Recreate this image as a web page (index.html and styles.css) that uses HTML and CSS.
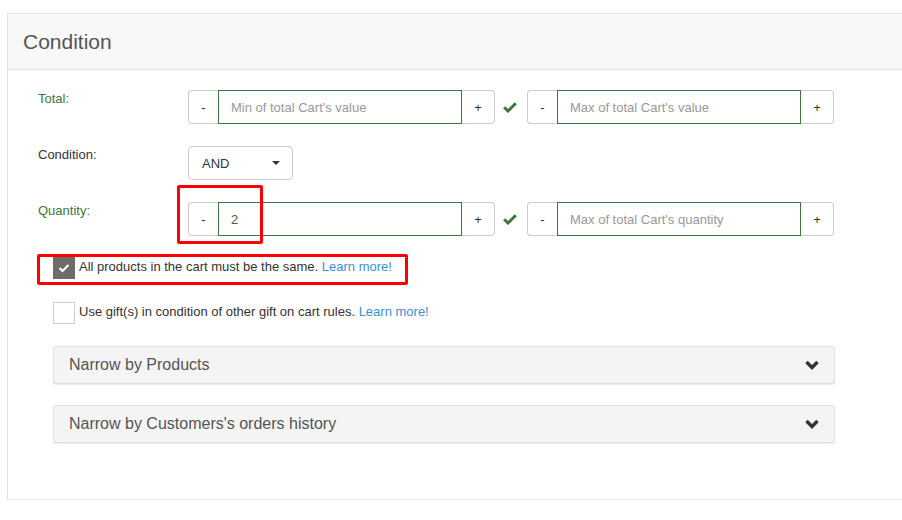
FILE: index.html
```html
<!DOCTYPE html>
<html>
<head>
<meta charset="utf-8">
<link rel="stylesheet" href="styles.css">
</head>
<body>
<div class="panel">
  <div class="panel-head">Condition</div>
  <div class="panel-body">
    <div class="row">
      <div class="lbl ok">Total:</div>
      <div class="ctrl">
        <div class="igroup">
          <span class="addon left">-</span>
          <input class="field" type="text" placeholder="Min of total Cart's value">
          <span class="addon right">+</span>
        </div>
        <span class="valid"><svg width="14" height="12" viewBox="0 0 14 12"><path d="M1.2 6.2 L5 10 L12.8 2.2" fill="none" stroke="#3c763d" stroke-width="3"/></svg></span>
        <div class="igroup">
          <span class="addon left">-</span>
          <input class="field" type="text" placeholder="Max of total Cart's value">
          <span class="addon right">+</span>
        </div>
      </div>
    </div>
    <div class="row">
      <div class="lbl">Condition:</div>
      <div class="ctrl">
        <div class="select"><span>AND</span><span class="caret"></span></div>
      </div>
    </div>
    <div class="row">
      <div class="lbl ok">Quantity:</div>
      <div class="ctrl">
        <div class="igroup">
          <span class="addon left">-</span>
          <input class="field" type="text" value="2">
          <span class="addon right">+</span>
        </div>
        <span class="valid"><svg width="14" height="12" viewBox="0 0 14 12"><path d="M1.2 6.2 L5 10 L12.8 2.2" fill="none" stroke="#3c763d" stroke-width="3"/></svg></span>
        <div class="igroup">
          <span class="addon left">-</span>
          <input class="field" type="text" placeholder="Max of total Cart's quantity">
          <span class="addon right">+</span>
        </div>
      </div>
    </div>
    <div class="extras">
      <label class="cb-row">
        <span class="cb checked"><svg width="12" height="10" viewBox="0 0 12 10"><path d="M1.5 5 L4.5 8 L10.5 2" fill="none" stroke="#fff" stroke-width="2.2"/></svg></span>
        <span class="cb-text">All products in the cart must be the same. <a class="more" href="#">Learn more!</a></span>
      </label>
      <label class="cb-row">
        <span class="cb"></span>
        <span class="cb-text">Use gift(s) in condition of other gift on cart rules. <a class="more" href="#">Learn more!</a></span>
      </label>
      <div class="acc first">
        <span>Narrow by Products</span>
        <svg class="chev" width="14" height="10" viewBox="0 0 14 10"><path d="M1.5 2 L7 7.5 L12.5 2" fill="none" stroke="#333" stroke-width="3.4"/></svg>
      </div>
      <div class="acc">
        <span>Narrow by Customers's orders history</span>
        <svg class="chev" width="14" height="10" viewBox="0 0 14 10"><path d="M1.5 2 L7 7.5 L12.5 2" fill="none" stroke="#333" stroke-width="3.4"/></svg>
      </div>
    </div>
  </div>
</div>
<div class="mark mark-qty"></div>
<div class="mark mark-same"></div>
</body>
</html>
```
FILE: styles.css
```css
* { box-sizing: border-box; }
html, body { margin: 0; padding: 0; background: #fff; }
body {
  font-family: "Liberation Sans", Arial, sans-serif;
  color: #333;
  position: relative;
  height: 520px;
  overflow: hidden;
}
.panel {
  margin: 13px 0 0 7px;
  border: 1px solid #e3e3e3;
  border-right: none;
  height: 487px;
}
.panel-head {
  height: 56px;
  background: #f8f8f8;
  border-bottom: 1px solid #e3e3e3;
  display: flex;
  align-items: center;
  padding-left: 15px;
  font-size: 21px;
  color: #555;
}
.panel-body {
  padding: 20px 0 0 30px;
}
.row {
  display: flex;
  align-items: flex-start;
  margin-bottom: 22px;
}
.lbl {
  width: 150px;
  font-size: 13px;
  line-height: 18px;
  color: #333;
}
.lbl.ok { color: #3c763d; }
.ctrl {
  display: flex;
  align-items: center;
}
.igroup {
  display: flex;
  height: 34px;
}
.addon {
  display: flex;
  align-items: center;
  justify-content: center;
  height: 34px;
  background: #fff;
  border: 1px solid #ccc;
  font-size: 13px;
  color: #333;
}
.addon.left {
  width: 30px;
  border-right: none;
  border-radius: 4px 0 0 4px;
}
.addon.right {
  width: 33px;
  border-left: none;
  border-radius: 0 4px 4px 0;
}
.field {
  width: 244px;
  height: 34px;
  border: 1px solid #3c763d;
  border-radius: 0;
  padding: 0 12px;
  font-family: "Liberation Sans", Arial, sans-serif;
  font-size: 13px;
  color: #555;
  outline: none;
  margin: 0;
}
.field::placeholder { color: #999; }
.valid {
  width: 32px;
  display: flex;
  justify-content: flex-start;
  padding-left: 8px;
}
.valid svg { display: block; }
.select {
  width: 105px;
  height: 34px;
  border: 1px solid #ccc;
  border-radius: 4px;
  display: flex;
  align-items: center;
  justify-content: space-between;
  padding: 0 12px 0 13px;
  font-size: 13px;
  color: #333;
}
.caret {
  width: 0;
  height: 0;
  border-top: 4px solid #333;
  border-left: 4px solid transparent;
  border-right: 4px solid transparent;
}
.extras {
  margin-left: 15px;
}
.cb-row {
  display: flex;
  align-items: center;
  height: 22px;
  margin-bottom: 23px;
  font-size: 13px;
}
.cb-row:first-child { margin-top: -1px; }
.cb {
  width: 22px;
  height: 22px;
  border: 1px solid #d0ccc8;
  background: #fff;
  display: flex;
  align-items: center;
  justify-content: center;
  margin-right: 4px;
  flex: none;
}
.cb.checked {
  background: #6f6b67;
  border-color: #6f6b67;
}
.cb svg { display: block; }
.cb-text { color: #333; line-height: 16px; margin-top: -2px; }
.more { color: #3d8fd8; text-decoration: none; }
.acc {
  width: 782px;
  height: 38px;
  background: #f4f4f4;
  border: 1px solid #e0e0e0;
  border-radius: 3px;
  box-shadow: 0 1px 1px rgba(0,0,0,0.08);
  display: flex;
  align-items: center;
  justify-content: space-between;
  padding: 0 15px;
  font-size: 16px;
  color: #555;
  margin-bottom: 21px;
}
.acc.first { margin-top: -1px; }
.chev { display: block; }
.mark {
  position: absolute;
  border: 3px solid #f00;
  border-radius: 2px;
}
.mark-qty { left: 177px; top: 185px; width: 86px; height: 59px; }
.mark-same { left: 37px; top: 254px; width: 371px; height: 31px; }
```
